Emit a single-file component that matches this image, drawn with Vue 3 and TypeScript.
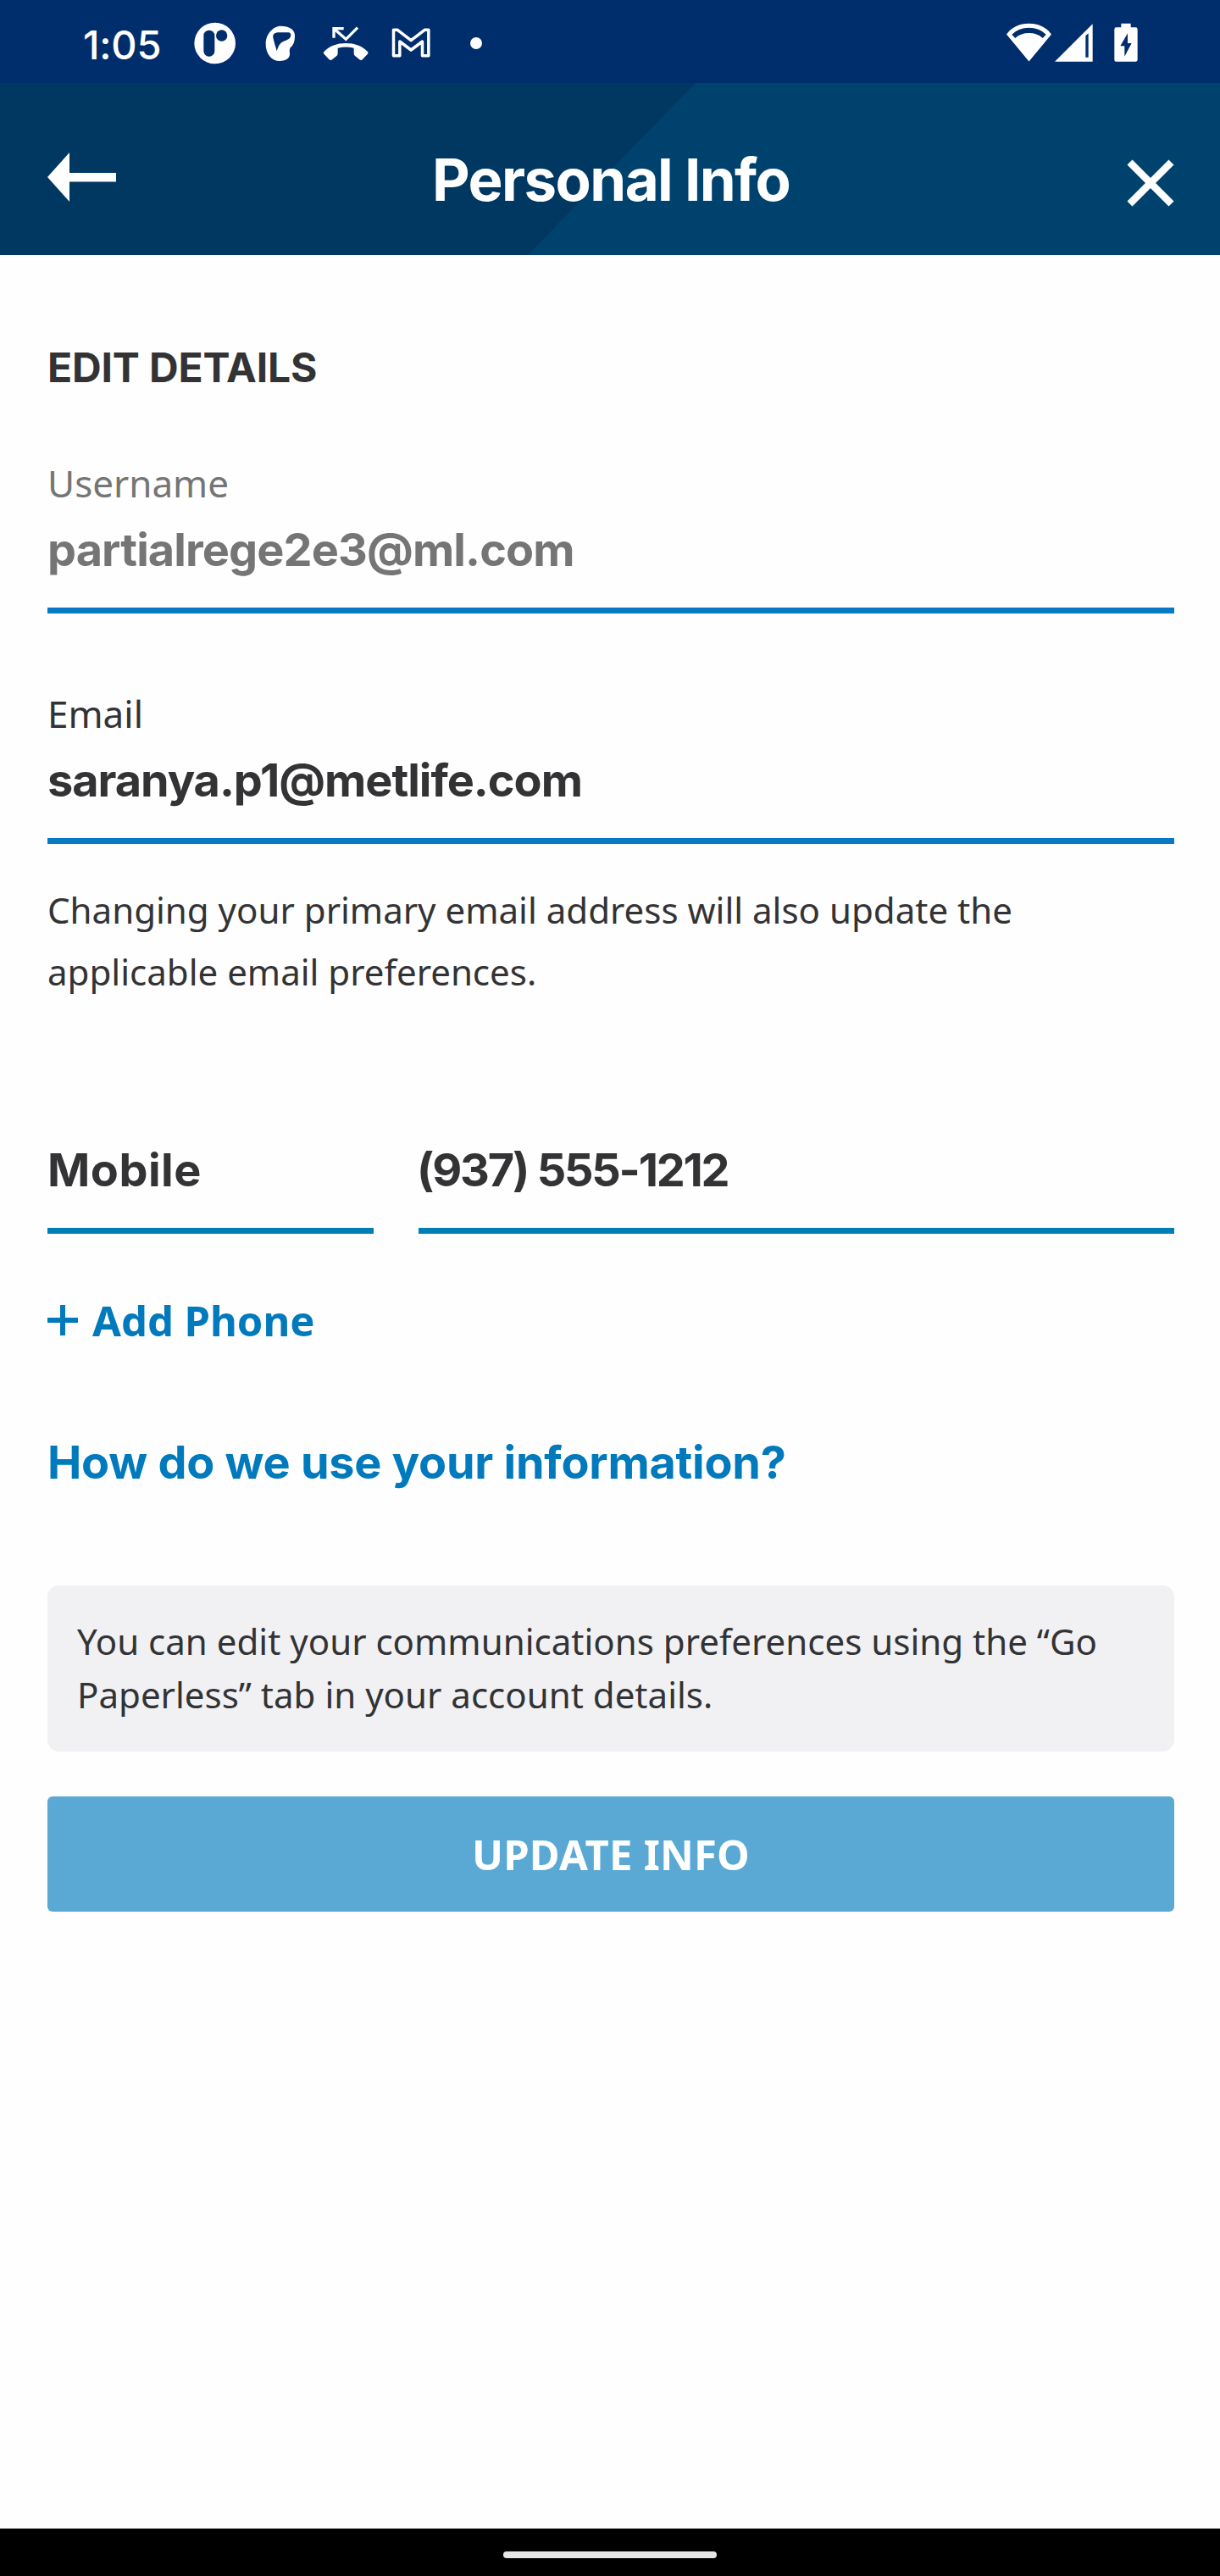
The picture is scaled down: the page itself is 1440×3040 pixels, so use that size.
<script setup lang="ts">
interface Field {
  id: string
  label: string
  value: string
  muted: boolean
}

const fields: Field[] = [
  { id: 'username', label: 'Username', value: 'partialrege2e3@ml.com', muted: true },
  { id: 'email', label: 'Email', value: 'saranya.p1@metlife.com', muted: false },
]
</script>

<template>
  <div class="screen">
    <div class="status">
      <span class="clock">1:05</span>
      <svg class="i-app" viewBox="449 79 150 150" width="50" height="50">
        <circle cx="523" cy="154" r="73" fill="#fff" />
        <rect x="483" y="108" width="39" height="93" rx="19" fill="#002e6d" />
        <circle cx="547" cy="127" r="20" fill="#002e6d" />
      </svg>
      <svg class="i-head" viewBox="700 91 108 129" width="36" height="43">
        <path fill="#fff" fill-rule="evenodd" d="M755 93C728 93 702 122 702 156C702 190 722 217 751 217C775 217 788 206 787 190C786 181 785 173 792 167C802 158 805 145 805 127C805 105 785 93 755 93ZM741 182C737 166 731 150 728 134C726 120 736 116 750 116H780C789 116 793 122 790 130C787 141 774 143 762 149C750 156 746 168 741 182Z" />
      </svg>
      <svg class="i-call" viewBox="904 93 162 123" width="54" height="41">
        <path fill="none" stroke="#fff" stroke-width="10" d="M943 134V101H978M944 102L986 139L1027 98" />
        <path fill="#fff" d="M986 153C1018 153 1043 163 1062 182Q1067 187 1062 192L1045 210Q1040 215 1034 211L1019 199Q1014 196 1014 190V170Q986 163 957 170V190Q957 196 952 199L937 211Q931 215 926 210L909 192Q904 187 909 182C928 163 953 153 986 153Z" />
      </svg>
      <svg class="i-mail" viewBox="1147 99 137 105" width="46" height="35">
        <path fill="none" stroke="#fff" stroke-width="10.500" stroke-linejoin="round" d="M1154 197V106H1168L1216 143L1264 106H1278V197H1256V147L1216 177L1176 147V197Z" />
      </svg>
      <span class="dot"></span>
      <svg class="i-wifi" viewBox="83 82 160 138" width="53" height="46">
        <path fill="#fff" fill-rule="evenodd" d="M163 219L83 122Q112 84 163 84Q214 84 243 122ZM102 123L114 136Q134 118 163 118Q192 118 212 136L224 123Q200 99 163 99Q126 99 102 123Z" />
      </svg>
      <svg class="i-cell" viewBox="256 85 135 135" width="45" height="45">
        <path fill="#fff" fill-rule="evenodd" d="M256 219L390 86V219ZM365 128V204H375V119Z" />
      </svg>
      <svg class="i-bat" viewBox="464 82 84 138" width="28" height="46">
        <path fill="#fff" fill-rule="evenodd" d="M489 84H523V98H540Q547 98 547 105V213Q547 219 540 219H471Q465 219 465 213V105Q465 98 471 98H489ZM512 119L486 164H501V201L526 154H512Z" />
      </svg>
    </div>

    <header class="bar">
      <svg class="back" viewBox="0 0 81 58" width="81" height="58">
        <path fill="#fff" d="M0 29L26 0V24H81V34.500H26V58Z" />
      </svg>
      <h1>Personal Info</h1>
      <svg class="close" viewBox="0 0 56 56" width="56" height="56">
        <path d="M3.500 3.500L52.500 52.500M52.500 3.500L3.500 52.500" stroke="#fff" stroke-width="8.500" />
      </svg>
    </header>

    <main>
      <h2>EDIT DETAILS</h2>
      <div v-for="f in fields" :key="f.id" class="field" :class="{ muted: f.muted }">
        <label>{{ f.label }}</label>
        <div class="value" :class="f.id">{{ f.value }}</div>
      </div>
      <p class="hint">Changing your primary email address will also update the<br />applicable email preferences.</p>

      <div class="phones">
        <div class="value type">Mobile</div>
        <div class="value number">(937) 555-1212</div>
      </div>
      <a class="add">
        <svg viewBox="0 0 36 36" width="36" height="36"><path d="M18 0V36M0 18H36" stroke="#007abc" stroke-width="6" /></svg>
        <span>Add Phone</span>
      </a>
      <a class="how">How do we use your information?</a>
      <div class="note">You can edit your communications preferences using the “Go<br />Paperless” tab in your account details.</div>
      <button class="update">UPDATE INFO</button>
    </main>

    <footer><span class="pill"></span></footer>
  </div>
</template>

<style>
body {
  margin: 0;
  background: #fefefe;
}
</style>

<style scoped>
.screen {
  width: 1440px;
  height: 3040px;
  display: flex;
  flex-direction: column;
  overflow: hidden;
  background: #fefefe;
  color: #333335;
  font-family: "Noto Sans", sans-serif;
}
svg {
  display: block;
  flex: none;
}
.status {
  height: 98px;
  flex: none;
  display: flex;
  align-items: flex-start;
  box-sizing: border-box;
  padding-left: 98px;
  background: #002e6d;
}
.clock {
  width: 131px;
  margin-top: 23px;
  font: 500 47px/60px Inter, sans-serif;
  letter-spacing: -0.2px;
  color: #fff;
}
.i-app { margin-top: 26px; }
.i-head { margin: 30px 0 0 34px; }
.i-call { margin: 31px 0 0 32px; }
.i-mail { margin: 33px 0 0 27px; }
.dot {
  width: 14px;
  height: 14px;
  margin: 44px 0 0 47px;
  border-radius: 50%;
  background: #fff;
}
.i-wifi { margin: 27px 0 0 619px; }
.i-cell { margin: 28px 0 0 4px; }
.i-bat { margin: 27px 0 0 25px; }
.bar {
  height: 203px;
  flex: none;
  display: flex;
  box-sizing: border-box;
  padding: 0 54px 0 56px;
  background: linear-gradient(134.3deg, #003862 0 50.050%, #00426e 50.200%);
}
.back { margin-top: 82px; }
.close { margin: 90px 0 0 auto; }
h1 {
  margin: 69px 0 0 373px;
  font: 700 69px/90px Inter, sans-serif;
  letter-spacing: -1.6px;
  color: #fff;
}
main {
  flex: 1;
  min-height: 0;
  padding: 103px 54px 0 56px;
  display: flex;
  flex-direction: column;
}
h2 {
  margin: 0 0 76px;
  font: 700 48px/60px Inter, sans-serif;
  letter-spacing: -0.15px;
}
.field {
  margin-bottom: 88px;
}
label {
  display: block;
  margin-bottom: 13px;
  font-size: 44px;
  line-height: 60px;
}
.value {
  padding-bottom: 32px;
  border-bottom: 7px solid #0879c4;
  font: 700 54px/72px Inter, sans-serif;
}
.username { letter-spacing: -0.9px; }
.email { letter-spacing: -1.05px; }
.muted {
  color: #757575;
}
.hint {
  margin: -46px 0 0;
  font-size: 42.05px;
  line-height: 72.500px;
}
.phones {
  display: flex;
  gap: 53px;
  margin-top: 162px;
}
.phones .value { border-color: #007fb5; }
.type { width: 385px; letter-spacing: 0.5px; }
.number {
  flex: 1;
  letter-spacing: -2.2px;
  text-indent: -2px;
}
.add {
  display: flex;
  align-items: center;
  gap: 17px;
  margin-top: 72px;
  font-weight: 700;
  font-size: 49px;
  line-height: 60px;
  color: #007abc;
}
.how {
  margin-top: 102px;
  font: 700 54px/72px Inter, sans-serif;
  letter-spacing: -0.25px;
  color: #007abc;
}
.note {
  height: 196px;
  flex: none;
  box-sizing: border-box;
  margin-top: 109px;
  padding: 34px 35px;
  border-radius: 14px;
  background: #f1f1f4;
  font-size: 42.05px;
  line-height: 63px;
}
.update {
  height: 136px;
  flex: none;
  margin-top: 53px;
  padding: 0 0 1px;
  border: 0;
  border-radius: 6px;
  background: #5aa9d4;
  color: #fff;
  font: 700 49px/60px "Noto Sans", sans-serif;
  letter-spacing: 0.2px;
}
footer {
  height: 56px;
  flex: none;
  display: flex;
  justify-content: center;
  background: #000;
}
.pill {
  width: 252px;
  height: 8px;
  margin-top: 27px;
  border-radius: 4px;
  background: #e6e6e6;
}
</style>
